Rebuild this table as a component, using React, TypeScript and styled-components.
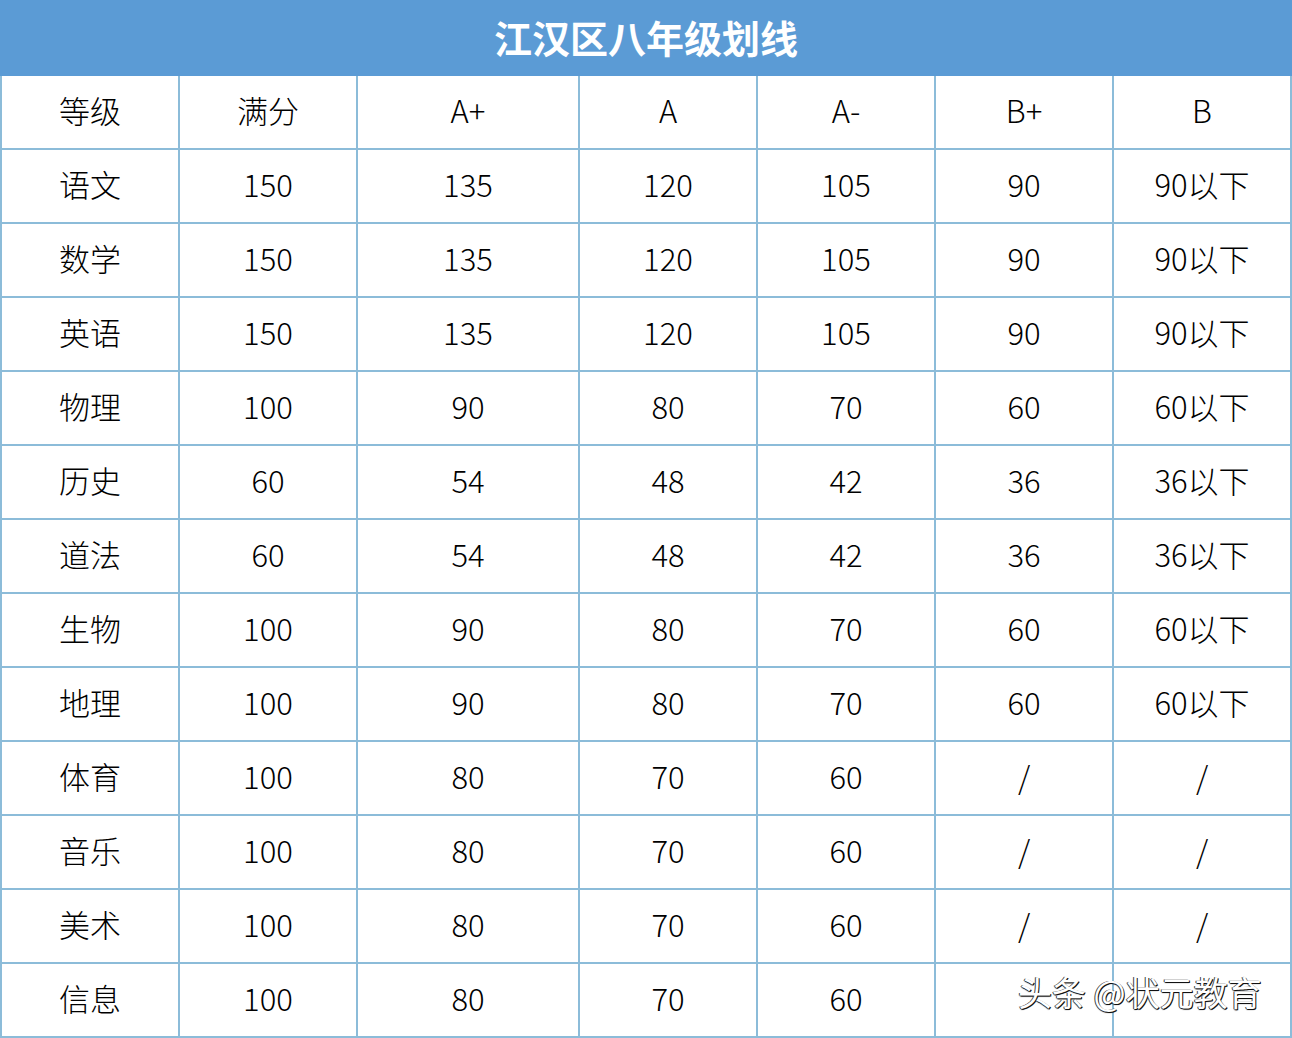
import React from "react";
import styled, { createGlobalStyle } from "styled-components";

const Global = createGlobalStyle`
  html, body { margin: 0; padding: 0; background: #ffffff; }
  body { font-family: "Noto Sans CJK SC", "Noto Sans", sans-serif; }
`;

const Page = styled.div`
  position: relative;
  width: 1292px;
  background: #ffffff;
`;

const TitleBar = styled.div`
  height: 76px;
  background: #5b9bd5;
  display: flex;
  align-items: center;
  justify-content: center;
  padding-bottom: 2px;
  box-sizing: border-box;
`;

const Title = styled.h1`
  margin: 0;
  color: #ffffff;
  font-family: "Noto Sans CJK SC", sans-serif;
  font-weight: 700;
  font-size: 38px;
  line-height: 1;
`;

const Grid = styled.div`
  display: grid;
  grid-template-columns: 176px 176px 220px 176px 176px 176px 176px;
  grid-auto-rows: 72px;
  gap: 2px;
  padding: 0 2px 2px 2px;
  background: #8cbcd9;
`;

const Cell = styled.div`
  background: #ffffff;
  display: flex;
  align-items: center;
  justify-content: center;
  box-sizing: border-box;
  padding-bottom: 5px;
  font-family: "Noto Sans CJK SC", "Noto Sans", sans-serif;
  font-size: 31px;
  font-weight: 300;
  color: #000000;
`;

const Watermark = styled.div`
  position: absolute;
  left: 1018px;
  top: 967px;
  font-family: "Noto Sans CJK SC", sans-serif;
  font-size: 34px;
  font-weight: 400;
  color: #ffffff;
  text-shadow: 1px 1px 0 #111, -1px 0 0 #444, 0 1px 1px #222;
  white-space: nowrap;
`;

const header = ["等级", "满分", "A+", "A", "A-", "B+", "B"];
const rows: string[][] = [
  ["语文", "150", "135", "120", "105", "90", "90以下"],
  ["数学", "150", "135", "120", "105", "90", "90以下"],
  ["英语", "150", "135", "120", "105", "90", "90以下"],
  ["物理", "100", "90", "80", "70", "60", "60以下"],
  ["历史", "60", "54", "48", "42", "36", "36以下"],
  ["道法", "60", "54", "48", "42", "36", "36以下"],
  ["生物", "100", "90", "80", "70", "60", "60以下"],
  ["地理", "100", "90", "80", "70", "60", "60以下"],
  ["体育", "100", "80", "70", "60", "/", "/"],
  ["音乐", "100", "80", "70", "60", "/", "/"],
  ["美术", "100", "80", "70", "60", "/", "/"],
  ["信息", "100", "80", "70", "60", "", ""],
];

export default function App() {
  return (
    <>
      <Global />
      <Page>
        <TitleBar>
          <Title>江汉区八年级划线</Title>
        </TitleBar>
        <Grid>
          {header.map((h, i) => (
            <Cell key={"h" + i}>{h}</Cell>
          ))}
          {rows.map((r, ri) =>
            r.map((c, ci) => <Cell key={ri + "-" + ci}>{c}</Cell>)
          )}
        </Grid>
        <Watermark>头条 @状元教育</Watermark>
      </Page>
    </>
  );
}
